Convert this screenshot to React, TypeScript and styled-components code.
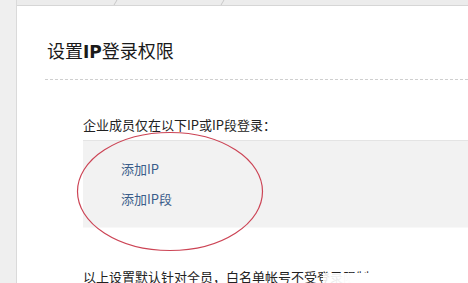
import React from "react";
import styled, { createGlobalStyle } from "styled-components";

const Global = createGlobalStyle`
  html, body { margin: 0; padding: 0; background: #fff; overflow: hidden; }
  body { font-family: "Noto Sans CJK SC", "Noto Sans", sans-serif; color: #222; }
`;

const Page = styled.div`
  display: flex;
  width: 468px;
  height: 283px;
  overflow: hidden;
  position: relative;
  background: #fff;
`;

const Sidebar = styled.div`
  width: 16px;
  flex: none;
  background: #efefef;
  border-right: 1px solid #dadada;
`;

const Main = styled.div`
  flex: 1;
  display: flex;
  flex-direction: column;
  min-width: 0;
  overflow: hidden;
`;

const TopBar = styled.div`
  height: 5px;
  background: #ececec;
  border-bottom: 1px solid #d6d6d6;
  display: flex;
  padding-left: 98px;
  gap: 106px;
`;

const TabSep = styled.span`
  width: 1px;
  height: 5px;
  background: #c8c8c8;
  transform: skewX(-30deg);
`;

const Content = styled.div`
  padding: 31px 0 0 28px;
  display: flex;
  flex-direction: column;
`;

const Title = styled.h1`
  margin: 0;
  padding: 0 0 14px 2px;
  font-size: 18px;
  line-height: 26px;
  font-weight: normal;
  color: #1a1a1a;
  border-bottom: 1px dashed #cfcfcf;
  b { font-weight: bold; font-family: "DejaVu Sans", sans-serif; font-size: 17px; }
`;

const Section = styled.div`
  padding: 35px 0 0 38px;
  display: flex;
  flex-direction: column;
`;

const Label = styled.div`
  font-size: 13px;
  line-height: 20px;
  color: #222;
  height: 25px;
`;

const Box = styled.div`
  background: #f2f2f2;
  border-top: 1px solid #e4e4e4;
  border-bottom: 1px solid #f8f8f8;
  height: 88px;
  padding: 18px 0 0 38px;
  box-sizing: border-box;
  display: flex;
  flex-direction: column;
  gap: 10px;
`;

const Link = styled.a`
  font-size: 13px;
  line-height: 20px;
  color: #3a5d8a;
  text-decoration: none;
`;

const Note = styled.div`
  margin-top: 39px;
  font-size: 13px;
  line-height: 20px;
  color: #222;
  white-space: nowrap;
`;

const Fade = styled.div`
  position: absolute;
  left: 323px;
  top: 273px;
  width: 145px;
  height: 10px;
  background: linear-gradient(to right, rgba(255,255,255,0.85), #fff 20%);
`;

const Ellipse = styled.svg`
  position: absolute;
  left: 70px;
  top: 125px;
  display: block;
  overflow: visible;
  pointer-events: none;
`;

export default function App() {
  return (
    <>
      <Global />
      <Page>
        <Sidebar />
        <Main>
          <TopBar>
            <TabSep />
            <TabSep />
          </TopBar>
          <Content>
            <Title>
              设置<b>IP</b>登录权限
            </Title>
            <Section>
              <Label>企业成员仅在以下IP或IP段登录：</Label>
              <Box>
                <Link href="#">添加IP</Link>
                <Link href="#">添加IP段</Link>
              </Box>
              <Note>以上设置默认针对全员，白名单帐号不受登录限制</Note>
            </Section>
          </Content>
        </Main>
        <Fade />
        <Ellipse width="200" height="135" viewBox="70 125 200 135">
          <ellipse
            cx="170"
            cy="191.5"
            rx="92.5"
            ry="59"
            fill="none"
            stroke="#cc4455"
            strokeWidth="1.2"
          />
        </Ellipse>
      </Page>
    </>
  );
}
